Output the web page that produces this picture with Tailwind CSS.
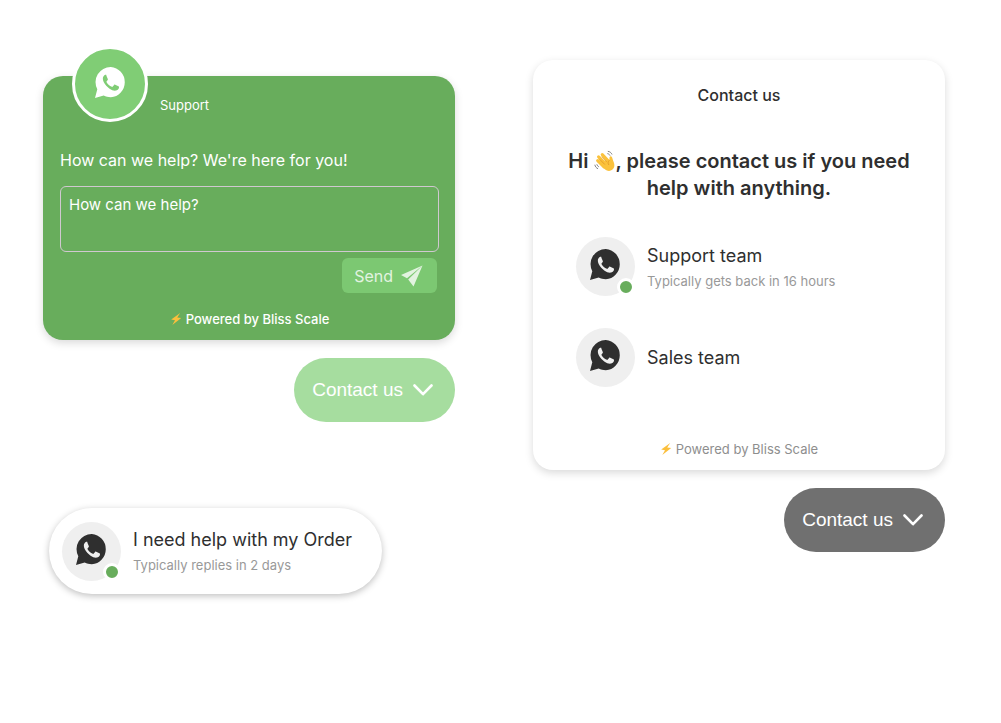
<!DOCTYPE html>
<html lang="en">
  <head>
    <meta charset="UTF-8" />
    <meta name="viewport" content="width=device-width, initial-scale=1.0" />
    <title>Bliss Scale - Contact widgets</title>
    <script src="https://cdn.jsdelivr.net/npm/@tailwindcss/browser@4"></script>
  </head>

  <body class="bg-white font-['Inter',sans-serif] text-[#2f2f2f]">
    <!-- Shared icons -->
    <svg class="hidden">
      <defs>
        <symbol id="whatsapp" viewBox="0 0 31 31">
          <path fill-rule="evenodd" d="M15.800 0a15.200 15.200 0 0 1 0 30.300c-2.600 0-5-.6-7.100-1.700L0 31l2.300-8.700A15.200 15.200 0 0 1 15.800 0zM11.400 8c-.5-.3-1.300-.3-2 .3-1.100.9-1.700 2.300-1.500 4 .5 3.800 3.700 7.300 6.700 9.400 2.500 1.700 5.200 2.500 7.300 1.500 1.300-.6 2.200-1.800 2.100-3.100 0-.4-.2-.6-.6-.8l-3.200-1.600c-.5-.2-.8-.1-1.100.3l-1.300 1.600c-.3.300-.6.400-1 .2-2.200-.9-4-2.500-5.200-4.600-.2-.4-.2-.6.1-.9l1-1.300c.2-.3.2-.6.1-.9l-1.400-3.400c-.1-.3-.1-.5 0-.7z" />
        </symbol>
        <symbol id="bolt" viewBox="0 0 12 12">
          <path fill="#fbbf3c" d="M10.200 0 1.200 6.600l3.800.6L2.300 12l8.900-6.900-4-.6z" />
        </symbol>
        <symbol id="chevron" viewBox="0 0 20 12">
          <path fill="none" stroke="currentColor" stroke-width="2.600" stroke-linecap="round" stroke-linejoin="round" d="M1.500 1.500 10 10.200l8.500-8.700" />
        </symbol>
      </defs>
    </svg>

    <main class="grid grid-cols-2 gap-[78px] pr-14 pb-8 pl-[43px]">
      <div class="flex flex-col pt-[76px]">
        <!-- Support chat box -->
        <form class="rounded-[20px] bg-[#68ad5c] pr-4 pb-3 pl-[17px] text-white shadow-[0_3px_8px_rgba(0,0,0,0.15)]">
          <div class="flex items-end gap-3 pl-3">
            <div class="-mt-[30px] flex size-[76px] items-center justify-center rounded-full border-3 border-white bg-[#80cd75] pb-1">
              <svg class="size-[31px]" fill="currentColor"><use href="#whatsapp" /></svg>
            </div>
            <p class="pb-2 text-[13px] leading-[18px]">Support</p>
          </div>
          <label for="message" class="mt-[26px] block text-base leading-6">How can we help? We're here for you!</label>
          <textarea id="message" placeholder="How can we help?" class="mt-[14px] block h-[66px] w-full resize-none rounded-md border border-[#d0c8d0] bg-transparent px-2 py-1.5 text-[15px] leading-6 placeholder:text-white"></textarea>
          <button type="button" class="mt-1.5 mr-0.5 ml-auto flex h-[35px] items-center gap-2 rounded-md bg-[#7cc872] pr-[14px] pl-3 text-base text-[#e2f3e0]">
            Send
            <svg class="size-[22px]" viewBox="0 0 22 22" fill="currentColor">
              <path d="M21.500.500 0 10l6 3.300zM21.500.500 7.200 14.600l5.300 6.900z" />
            </svg>
          </button>
          <p class="mt-[17px] flex items-center justify-center gap-1 text-[13px] leading-[18px] font-medium">
            <svg class="size-3"><use href="#bolt" /></svg>
            Powered by Bliss Scale
          </p>
        </form>

        <button type="button" class="mt-[18px] flex h-16 items-center gap-2.5 self-end rounded-full bg-[#a6dd9f] pr-[22px] pl-[18px] font-['Liberation_Sans',sans-serif] text-[19px] text-white">
          Contact us
          <svg class="h-3 w-5"><use href="#chevron" /></svg>
        </button>

        <!-- Single agent button -->
        <button type="button" class="mt-[86px] ml-1.5 flex h-[86px] items-center gap-3 self-start rounded-full bg-white pr-[30px] pl-[13px] text-left shadow-[0_2px_7px_rgba(0,0,0,0.25)]">
          <span class="relative flex size-[59px] items-center justify-center rounded-full bg-[#efefef] pb-1">
            <svg class="size-[31px]" fill="#2f2f2f"><use href="#whatsapp" /></svg>
            <span class="absolute right-0 bottom-0 size-[18px] rounded-full border-3 border-white bg-[#68ad5c]"></span>
          </span>
          <span>
            <span class="block text-lg leading-6">I need help with my Order</span>
            <span class="mt-1 block text-[13px] leading-[18px] text-[#999]">Typically replies in 2 days</span>
          </span>
        </button>
      </div>

      <div class="flex flex-col pt-[60px]">
        <!-- Team list -->
        <section class="rounded-[20px] bg-white px-[26px] pt-[23px] pb-3 shadow-[0_3px_8px_rgba(0,0,0,0.15)]">
          <h2 class="text-center text-base leading-6 font-medium">Contact us</h2>
          <p class="mt-[41px] text-center text-xl leading-[27px] font-semibold">
            Hi
            <svg class="inline size-[22px] align-[-4px]" viewBox="0 0 24 24">
              <path fill="none" stroke="#fbc23c" stroke-width="3.400" stroke-linecap="round" d="M4 11.500l7 7M5 7.500l8 8M9 5l7.500 8" />
              <path fill="#fbc23c" d="M5 12 16.500 11.500c.8-1.500-.2-3.500 1-4.500 1.500-.8 2.300.8 2.700 2.600.5 2.200 2.800 5.400 1.800 9-1 3.400-5 5.400-8.500 3.400C10 20.500 7 15.500 5 12z" />
              <path fill="none" stroke="#d98a1e" stroke-width=".7" stroke-linecap="round" d="M6.500 10.500l5 5M8.500 7.500l5 5M16.500 11.500c-1.500 1.500-1.500 3-.5 4.500" />
              <path fill="none" stroke="#777" stroke-width="1" stroke-linecap="round" d="M15.500 1.500c1.800.3 3.200 1.300 4 3M15 4c1 .2 1.800.8 2.300 1.700M1 16.500c.4 1.800 1.400 3 3 3.800M3.200 16c.3 1 .8 1.700 1.700 2.200" />
            </svg>, please contact us if you need help with anything.
          </p>
          <ul class="mt-[35px] flex flex-col gap-8 px-[17px]">
            <li>
              <button type="button" class="flex items-center gap-3 text-left">
                <span class="relative flex size-[59px] items-center justify-center rounded-full bg-[#efefef] pb-1">
                  <svg class="size-[31px]" fill="#2f2f2f"><use href="#whatsapp" /></svg>
                  <span class="absolute right-0 bottom-0 size-[18px] rounded-full border-3 border-white bg-[#68ad5c]"></span>
                </span>
                <span>
                  <span class="block text-lg leading-6">Support team</span>
                  <span class="mt-1 block text-[13px] leading-[18px] text-[#999]">Typically gets back in 16 hours</span>
                </span>
              </button>
            </li>
            <li>
              <button type="button" class="flex items-center gap-3 text-left">
                <span class="flex size-[59px] items-center justify-center rounded-full bg-[#efefef] pb-1">
                  <svg class="size-[31px]" fill="#2f2f2f"><use href="#whatsapp" /></svg>
                </span>
                <span class="text-lg leading-6">Sales team</span>
              </button>
            </li>
          </ul>
          <p class="mt-[53px] flex items-center justify-center gap-1 text-[13px] leading-[18px] text-[#8e8e8e]">
            <svg class="size-3"><use href="#bolt" /></svg>
            Powered by Bliss Scale
          </p>
        </section>

        <button type="button" class="mt-[18px] flex h-16 items-center gap-2.5 self-end rounded-full bg-[#707070] pr-[22px] pl-[18px] font-['Liberation_Sans',sans-serif] text-[19px] text-white">
          Contact us
          <svg class="h-3 w-5"><use href="#chevron" /></svg>
        </button>
      </div>
    </main>
  </body>
</html>
